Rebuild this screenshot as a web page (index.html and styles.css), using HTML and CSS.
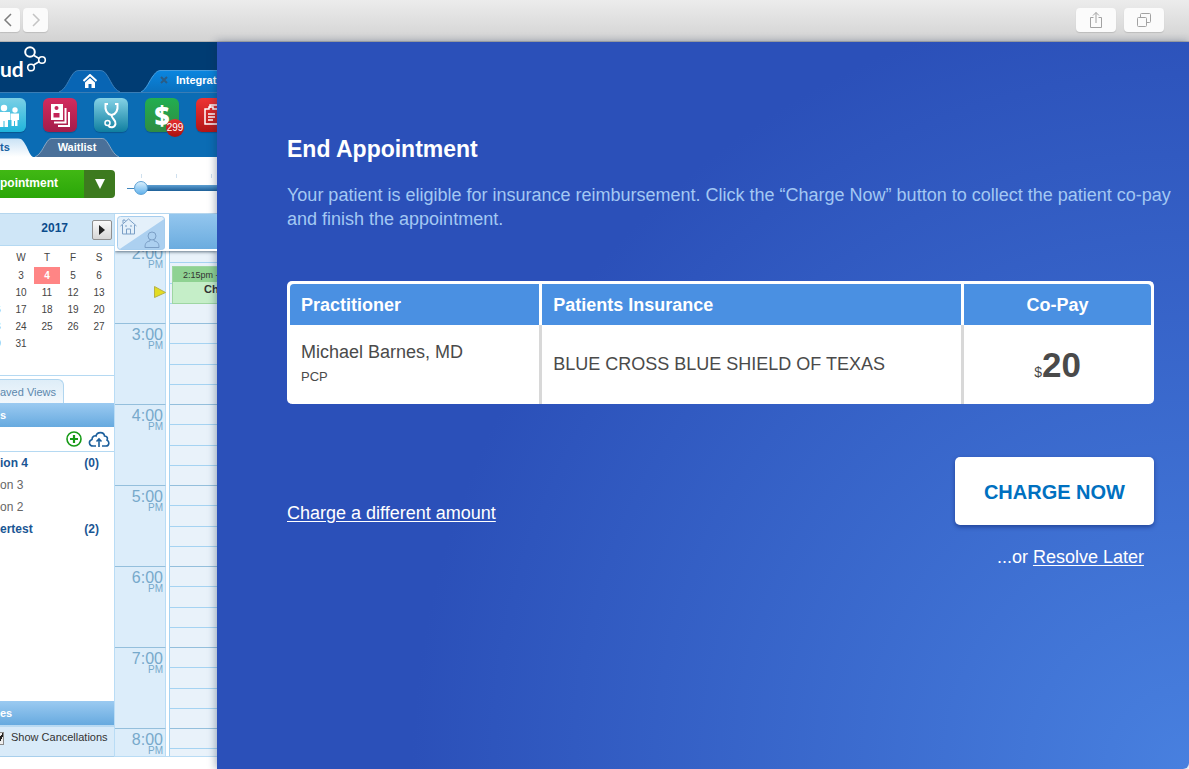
FILE: index.html
```html
<!DOCTYPE html>
<html lang="en">
<head>
    <meta charset="UTF-8">
    <meta name="viewport" content="width=device-width, initial-scale=1.0">
    <title>End Appointment</title>
    <link rel="stylesheet" href="styles.css">
</head>
<body>
    <div class="browser-bar">
        <div class="nav-buttons">
            <button type="button" class="bar-button back" aria-label="Back">
                <svg width="10" height="14" viewBox="0 0 10 14"><path d="M8 1 2 7l6 6" fill="none" stroke="#7d7d7d" stroke-width="1.5"/></svg>
            </button>
            <button type="button" class="bar-button forward" aria-label="Forward">
                <svg width="10" height="14" viewBox="0 0 10 14"><path d="m2 1 6 6-6 6" fill="none" stroke="#c4c4c4" stroke-width="1.5"/></svg>
            </button>
        </div>
        <div class="window-buttons">
            <button type="button" class="bar-button wide" aria-label="Share">
                <svg width="14" height="18" viewBox="0 0 14 18" fill="none" stroke="#a2a2a2"><path d="M4.500 6.500h-3v10h11v-10h-3M7 12V1.500M4 4.500l3-3 3 3"/></svg>
            </button>
            <button type="button" class="bar-button wide" aria-label="Show tabs">
                <svg width="14" height="14" viewBox="0 0 14 14" fill="none" stroke="#a2a2a2"><rect x=".5" y="4.500" width="9" height="9" rx="1"/><path d="M3.500 4.500v-3a1 1 0 0 1 1-1h8a1 1 0 0 1 1 1v7a1 1 0 0 1-1 1h-3"/></svg>
            </button>
        </div>
    </div>

    <div class="workspace">
        <div class="app">
            <header class="app-header">
                <div class="logo">
                    <span>ud</span>
                    <svg width="24" height="28" viewBox="0 0 24 28" fill="none" stroke="#fff"><circle cx="6" cy="6" r="4.800" stroke-width="2"/><circle cx="18" cy="14" r="3.300" stroke-width="1.600"/><circle cx="7" cy="21.500" r="3.300" stroke-width="1.600"/><path d="m10 9.500 5 3M9.500 19l6-3.500" stroke-width="1.600"/></svg>
                </div>
                <button type="button" class="app-tab home" aria-label="Home">
                    <svg class="tab-shape" viewBox="0 0 61 23" preserveAspectRatio="none"><path d="M0 23C7 20 9 11 14 4c2-3 4-3.500 7-3.500h19c3 0 5 .5 7 3.500 5 7 7 16 14 19" fill="#0865b4" stroke="#3d7fb8"/></svg>
                    <svg class="tab-icon" width="14" height="14" viewBox="0 0 14 14"><path d="m.5 7 6.500-6 6.500 6" fill="none" stroke="#fff" stroke-width="2"/><path d="M2 8.500 7 4l5 4.500V14H8.500v-4h-3v4H2z" fill="#fff"/></svg>
                </button>
                <button type="button" class="app-tab current">
                    <svg class="tab-shape" viewBox="0 0 90 23" preserveAspectRatio="none"><defs><linearGradient id="tab-fill" x2="0" y2="1"><stop stop-color="#0a86e0"/><stop offset="1" stop-color="#0b70bd"/></linearGradient></defs><path d="M0 23C6 20 8 11 13 5c2-3 4-4.500 7-4.500h70V23" fill="url(#tab-fill)" stroke="#4aa0e0"/></svg>
                    <svg class="tab-close" width="8" height="8" viewBox="0 0 8 8"><path d="m1 1 6 6M7 1 1 7" stroke="#2b5c85" stroke-width="2"/></svg>
                    <span>Integrat</span>
                </button>
            </header>

            <div class="ribbon">
                <div class="shortcuts">
                    <button type="button" class="shortcut people" aria-label="Patients">
                        <svg width="34" height="34" viewBox="0 0 34 34" fill="#fff"><circle cx="12" cy="10" r="3.200"/><path d="M6 14h12v8h-2v7h-3.500v-6h-1v6H8v-7H6z"/><circle cx="23" cy="12" r="2.700"/><path d="M18.500 15.500h8.500V22h-1.500v6H23v-5h-1v5h-2.500v-6h-1z"/></svg>
                    </button>
                    <button type="button" class="shortcut cards" aria-label="Records">
                        <svg width="34" height="34" viewBox="0 0 34 34"><path d="M8 6h12v16H8z" fill="#fff"/><circle cx="13.500" cy="10" r="2" fill="#c42458"/><path d="M10.500 15h6v4.500h-6z" fill="#c42458"/><path d="M11 24.500h11.500V10M15 28h11V14" fill="none" stroke="#fff" stroke-width="2"/></svg>
                    </button>
                    <button type="button" class="shortcut clinic" aria-label="Clinical">
                        <svg width="34" height="34" viewBox="0 0 34 34" fill="none" stroke="#fff" stroke-width="2"><path d="M14 6h-2.500C11 11 12 16 17.500 17 23 16 24 11 23.500 6H21"/><path d="M17.500 17c0 4 5 5 4 9-1 4-5 4-7 2"/><circle cx="13.500" cy="25" r="2.500" stroke-width="1.500"/></svg>
                    </button>
                    <button type="button" class="shortcut billing">
                        <span class="dollar">$</span>
                        <span class="badge">299</span>
                    </button>
                    <button type="button" class="shortcut notes" aria-label="Documents">
                        <svg width="34" height="34" viewBox="0 0 34 34" fill="none" stroke="#fff" stroke-width="1.500"><path d="M14 10V7h7l4 4v11h-3"/><path d="M9 11h4V9h4v2h5v15H9zM12 16h7M12 19h7M12 22h5"/></svg>
                    </button>
                </div>
                <div class="sub-tabs">
                    <button type="button" class="sub-tab selected">
                        <svg class="tab-shape" viewBox="0 0 34 20" preserveAspectRatio="none"><defs><linearGradient id="sub-fill" x2="0" y2="1"><stop stop-color="#c9e2f5"/><stop offset="1" stop-color="#fff"/></linearGradient></defs><path d="M0 .5h18c3 0 4 1 6 4 4 6 5 13 9 15.500H0z" fill="url(#sub-fill)"/></svg>
                        <span>ts</span>
                    </button>
                    <button type="button" class="sub-tab">
                        <svg class="tab-shape" viewBox="0 0 84 20" preserveAspectRatio="none"><path d="M0 20C6 17 8 10 12 4c2-3 3-3.500 6-3.500h48c3 0 4 .5 6 3.500 4 6 6 13 12 16" fill="#4a7099" stroke="#8fa9c2"/></svg>
                        <span>Waitlist</span>
                    </button>
                </div>
            </div>

            <div class="control-row">
                <div class="split-button">
                    <button type="button" class="new-appointment">pointment</button>
                    <button type="button" class="more" aria-label="More options">
                        <svg width="10" height="10" viewBox="0 0 10 10"><path d="M0 0h10L5 10z" fill="#fff"/></svg>
                    </button>
                </div>
                <div class="scale">
                    <input type="range" min="0" max="100" value="0" aria-label="Scale">
                </div>
            </div>

            <div class="app-body">
                <aside class="sidebar">
                    <div class="month">
                        <span>2017</span>
                        <button type="button" class="next" aria-label="Next month">
                            <svg width="6" height="10" viewBox="0 0 6 10"><path d="M0 0v10l6-5z" fill="#222"/></svg>
                        </button>
                    </div>
                    <div class="dates">
                        <table>
                            <thead>
                                <tr><th>T</th><th>W</th><th>T</th><th>F</th><th>S</th></tr>
                            </thead>
                            <tbody>
                                <tr><td>2</td><td>3</td><td class="today">4</td><td>5</td><td>6</td></tr>
                                <tr><td>9</td><td>10</td><td>11</td><td>12</td><td>13</td></tr>
                                <tr><td>16</td><td>17</td><td>18</td><td>19</td><td>20</td></tr>
                                <tr><td>23</td><td>24</td><td>25</td><td>26</td><td>27</td></tr>
                                <tr><td>30</td><td>31</td><td></td><td></td><td></td></tr>
                            </tbody>
                        </table>
                    </div>
                    <div class="views">
                        <button type="button" class="saved-views">aved Views</button>
                    </div>
                    <h2 class="section-title">s</h2>
                    <div class="list-tools">
                        <button type="button" aria-label="Add">
                            <svg width="16" height="16" viewBox="0 0 16 16" fill="none" stroke="#169a16"><circle cx="8" cy="8" r="7" stroke-width="1.600"/><path d="M8 4v8M4 8h8" stroke-width="2.200"/></svg>
                        </button>
                        <button type="button" aria-label="Upload">
                            <svg width="22" height="17" viewBox="0 0 22 17" fill="none" stroke="#1c5f9c" stroke-width="1.600"><path d="M8 15H5C1 15 0 10 4 8.500 4 5 7 4.500 8 5c1-4.500 8-4.500 8.500 0C19 5 20 7 19 9c3 2 2 6-1 6h-4"/><path d="M11 16V8M8.500 10.500 11 8l2.500 2.500"/></svg>
                        </button>
                    </div>
                    <ul class="calendars">
                        <li class="active"><span>ion 4</span><span>(0)</span></li>
                        <li><span>on 3</span></li>
                        <li><span>on 2</span></li>
                        <li class="active"><span>ertest</span><span>(2)</span></li>
                    </ul>
                    <h2 class="section-title">es</h2>
                    <label class="cancellations">
                        <input type="checkbox" checked>
                        <span>Show Cancellations</span>
                    </label>
                </aside>

                <main class="schedule">
                    <div class="schedule-head">
                        <button type="button" class="view-toggle" aria-label="Switch between location and provider">
                            <svg width="50" height="36" viewBox="0 0 50 36"><rect x="1.500" y="1.500" width="47" height="33" rx="3" fill="#e4f0fa"/><path d="M3 34.500h43a3 3 0 0 0 3-3V3.500z" fill="#acd0f0"/><rect x="1.500" y="1.500" width="47" height="33" rx="3" fill="none" stroke="#a6cdee"/><g fill="none" stroke="#7b9fc6"><path d="m4.500 11 8-7 8 7M6.500 10v9h12v-9M7 8V5h2v1M10.500 19v-5h4v5M9 11h2M14 11h2"/><circle cx="36" cy="21" r="4"/><path d="M29 32.500c0-5 2-6 5-6.500v-1.500M43 32.500c0-5-2-6-5-6.500v-1.500M29 32.500h14"/></g></svg>
                        </button>
                        <div class="provider"></div>
                    </div>
                    <div class="hours">
                        <div class="hour"><div class="time">2:00<small>PM</small></div><div class="slots"><i></i><i></i><i></i><i></i></div></div>
                        <div class="hour"><div class="time">3:00<small>PM</small></div><div class="slots"><i></i><i></i><i></i><i></i></div></div>
                        <div class="hour"><div class="time">4:00<small>PM</small></div><div class="slots"><i></i><i></i><i></i><i></i></div></div>
                        <div class="hour"><div class="time">5:00<small>PM</small></div><div class="slots"><i></i><i></i><i></i><i></i></div></div>
                        <div class="hour"><div class="time">6:00<small>PM</small></div><div class="slots"><i></i><i></i><i></i><i></i></div></div>
                        <div class="hour"><div class="time">7:00<small>PM</small></div><div class="slots"><i></i><i></i><i></i><i></i></div></div>
                        <div class="hour"><div class="time">8:00<small>PM</small></div><div class="slots"><i></i><i></i><i></i><i></i></div></div>
                        <svg class="now" width="12" height="12" viewBox="0 0 12 12"><path d="M.5.5v11l11-5z" fill="#e3dc22" stroke="#b5b04a"/></svg>
                        <div class="event">
                            <div class="event-time">2:15pm -</div>
                            <div class="event-name">Ch</div>
                        </div>
                    </div>
                </main>
            </div>
        </div>

        <section class="panel">
            <h1>End Appointment</h1>
            <p class="intro">Your patient is eligible for insurance reimbursement. Click the “Charge Now” button to collect the patient co-pay<br>and finish the appointment.</p>

            <table class="charge-table">
                <thead>
                    <tr>
                        <th class="practitioner">Practitioner</th>
                        <th class="insurance">Patients Insurance</th>
                        <th class="copay">Co-Pay</th>
                    </tr>
                </thead>
                <tbody>
                    <tr>
                        <td>Michael Barnes, MD<small>PCP</small></td>
                        <td>BLUE CROSS BLUE SHIELD OF TEXAS</td>
                        <td class="copay"><span class="currency">$</span><strong>20</strong></td>
                    </tr>
                </tbody>
            </table>

            <div class="actions">
                <a href="#amount" class="different">Charge a different amount</a>
                <div class="confirm">
                    <button type="button" class="charge-now">CHARGE NOW</button>
                    <p>...or <a href="#later">Resolve Later</a></p>
                </div>
            </div>
        </section>
    </div>
</body>
</html>
```
FILE: styles.css
```css
* {
    box-sizing: border-box;
}

body {
    font-family: "Liberation Sans", Arial, sans-serif;
    margin: 0;
    height: 100vh;
    display: flex;
    flex-direction: column;
    overflow: hidden;
    background: #fff;
}

button {
    font-family: inherit;
    margin: 0;
    padding: 0;
    border: 0;
    background: none;
    cursor: pointer;
}

svg {
    display: block;
    flex: none;
}

/* browser bar */
.browser-bar {
    flex: none;
    display: flex;
    justify-content: space-between;
    padding: 8px 25px 9px 0;
    background: linear-gradient(#ececec, #d3d3d3);
    border-bottom: 1px solid #b3b3b3;
}

.nav-buttons {
    display: flex;
    gap: 3px;
}

.window-buttons {
    display: flex;
    gap: 8px;
}

.bar-button {
    width: 25px;
    height: 24px;
    display: flex;
    align-items: center;
    justify-content: center;
    background: #fbfbfb;
    border-radius: 4px;
    box-shadow: 0 1px 1px #bdbdbd;
}

.bar-button.back {
    width: 20px;
    padding-right: 4px;
    border-radius: 0 4px 4px 0;
}

.bar-button.wide {
    width: 40px;
}

/* layout */
.workspace {
    flex: 1;
    min-height: 0;
    display: flex;
}

.app {
    flex: none;
    width: 217px;
    display: flex;
    flex-direction: column;
    overflow: hidden;
    padding-bottom: 12px;
}

/* app header */
.app-header {
    flex: none;
    display: flex;
    align-items: flex-end;
    height: 51px;
    background: #003c73;
    border-bottom: 1px solid #3a7db5;
}

.logo {
    flex: none;
    width: 59px;
    height: 46px;
    display: flex;
    align-items: flex-start;
    color: #fff;
    font: bold 21px/46px Lato, sans-serif;
}

.app-tab {
    position: relative;
    flex: none;
    height: 22px;
    display: flex;
    align-items: center;
    color: #fff;
    font-size: 11px;
    font-weight: bold;
}

.app-tab.home {
    width: 61px;
    justify-content: center;
    margin-right: 21px;
}

.app-tab.current {
    width: 90px;
    padding: 0 0 2px 19px;
    gap: 8px;
}

.tab-shape {
    position: absolute;
    inset: 0;
    width: 100%;
    height: 100%;
}

.tab-icon,
.tab-close,
.app-tab span,
.sub-tab span {
    position: relative;
}

/* ribbon */
.ribbon {
    flex: none;
    height: 64px;
    display: flex;
    flex-direction: column;
    justify-content: space-between;
    padding-top: 5px;
    background: #0b6cb4;
}

.shortcuts {
    display: flex;
    gap: 17px;
    margin-left: -8px;
}

.shortcut {
    position: relative;
    flex: none;
    width: 34px;
    height: 34px;
    border-radius: 6px;
    color: #fff;
    box-shadow: 0 1px 1px rgba(0, 0, 0, 0.2);
}

.people {
    background: linear-gradient(#7bd0e6, #1fb4dc);
}

.cards {
    background: linear-gradient(#d42a5e, #a31d4a);
}

.clinic {
    background: linear-gradient(#85d2e6, #0f7fa0);
}

.billing {
    background: linear-gradient(#22ae50, #2f8c43);
}

.notes {
    background: linear-gradient(#ee3333, #b31515);
}

.dollar {
    font: 800 26px/34px "Open Sans", sans-serif;
}

.badge {
    position: absolute;
    right: -5px;
    bottom: -5px;
    width: 18px;
    height: 18px;
    border-radius: 50%;
    background: linear-gradient(#e83030, #a81010);
    font-size: 10px;
    line-height: 18px;
    text-align: center;
}

.sub-tabs {
    display: flex;
    gap: 1px;
}

.sub-tab {
    position: relative;
    width: 84px;
    height: 19px;
    padding-bottom: 2px;
    color: #fff;
    font-size: 11px;
    font-weight: bold;
    text-align: center;
}

.sub-tab.selected {
    width: 34px;
    color: #1660a0;
    text-align: left;
}

/* new appointment and scale */
.control-row {
    flex: none;
    height: 56px;
    display: flex;
    align-items: flex-start;
    gap: 12px;
    padding-top: 13px;
}

.split-button {
    flex: none;
    width: 115px;
    height: 28px;
    display: flex;
    border-radius: 0 4px 4px 0;
    overflow: hidden;
}

.new-appointment {
    flex: 1;
    padding-bottom: 2px;
    background: linear-gradient(#41b814, #2aa608);
    color: #fff;
    font-size: 12px;
    font-weight: bold;
    text-align: left;
}

.more {
    width: 31px;
    display: flex;
    align-items: center;
    justify-content: center;
    background: #3d7a1f;
}

.scale {
    flex: none;
    width: 120px;
    padding-top: 10px;
    background: repeating-linear-gradient(90deg, #cfe0ee 0 1px, transparent 1px 35px) 14px 4px / 105px 4px no-repeat;
}

.scale input {
    display: block;
    width: 100%;
    height: 16px;
    margin: 0;
    appearance: none;
    background: linear-gradient(#3f86bd, #3f86bd) 0 8px / 7px 1px no-repeat;
}

.scale input::-webkit-slider-runnable-track {
    height: 6px;
    margin-left: 8px;
    background: linear-gradient(#5d9fd2, #1d5f98);
}

.scale input::-webkit-slider-thumb {
    appearance: none;
    width: 14px;
    height: 14px;
    margin: -4px 0 0 -1px;
    border: 1px solid #5fa3d6;
    border-radius: 50%;
    background: linear-gradient(#d8eefc, #62b2ec);
}

.app-body {
    flex: 1;
    min-height: 0;
    display: flex;
    border-top: 1px solid #b5d6ee;
}

/* sidebar */
.sidebar {
    flex: none;
    width: 115px;
    display: flex;
    flex-direction: column;
    overflow: hidden;
    border-right: 1px solid #b9dcf5;
    color: #444;
    font-size: 11px;
}

.month {
    flex: none;
    display: flex;
    align-items: center;
    justify-content: flex-end;
    gap: 24px;
    height: 32px;
    padding-right: 2px;
    background: #cfe6f7;
    border-bottom: 1px solid #b5d9f2;
    color: #0b4c8c;
    font-size: 12px;
    font-weight: bold;
}

.month span {
    padding-bottom: 4px;
}

.next {
    width: 20px;
    height: 20px;
    display: flex;
    align-items: center;
    justify-content: center;
    background: linear-gradient(#fafafa, #d6d6d6);
    border: 1px solid #8f8f8f;
    border-radius: 2px;
}

.dates {
    flex: none;
    height: 130px;
    padding-top: 2px;
    border-bottom: 1px solid #b5d9f2;
}

.dates table {
    width: 130px;
    margin-left: -18px;
    border-collapse: collapse;
    table-layout: fixed;
}

.dates th,
.dates td {
    height: 17px;
    padding: 0;
    font-size: 10px;
    font-weight: normal;
    text-align: center;
}

.dates th {
    height: 19px;
}

.dates .today {
    background: #ff8585;
    color: #fff;
    font-weight: bold;
}

.views {
    flex: none;
    padding-top: 3px;
}

.saved-views {
    width: 64px;
    height: 24px;
    background: linear-gradient(#deedf8, #f2f8fc);
    border: 1px solid #b0d5ef;
    border-width: 1px 1px 0 0;
    border-radius: 0 6px 0 0;
    color: #5c88ad;
    font-size: 11px;
    text-align: left;
}

.section-title {
    flex: none;
    height: 24px;
    margin: 0;
    background: linear-gradient(#9bcaf1, #67aadf);
    color: #fff;
    font-size: 11px;
    line-height: 24px;
}

.list-tools {
    flex: none;
    height: 25px;
    display: flex;
    align-items: center;
    justify-content: flex-end;
    gap: 6px;
    padding-right: 4px;
    border-bottom: 1px solid #b5d9f2;
}

.calendars {
    flex: 1;
    margin: 0;
    padding: 0;
    list-style: none;
    font-size: 12px;
    line-height: 22px;
}

.calendars li {
    display: flex;
    justify-content: space-between;
    padding-right: 15px;
    color: #666;
}

.calendars .active {
    color: #1a5694;
    font-weight: bold;
}

.cancellations {
    flex: none;
    height: 32px;
    display: flex;
    align-items: center;
    gap: 7px;
    padding-bottom: 10px;
    background: #d9ebf9;
    border-top: 2px solid #b9daf2;
    border-bottom: 1px solid #a8cfec;
    color: #333;
    white-space: nowrap;
}

.cancellations input {
    appearance: none;
    flex: none;
    width: 13px;
    height: 13px;
    margin: 4px 0 0 -9px;
    border: 1px solid #8a8a8a;
    background: linear-gradient(120deg, transparent 60%, #222 60% 75%, transparent 75%), #eee;
}

/* schedule */
.schedule {
    flex: 1;
    min-width: 0;
    display: flex;
    flex-direction: column;
    border-bottom: 1px solid #b9dcf5;
    overflow: hidden;
}

.schedule-head {
    position: relative;
    z-index: 1;
    flex: none;
    display: flex;
    gap: 3px;
    height: 37px;
    padding-left: 1px;
    background: #fff;
    box-shadow: 0 1px 3px rgba(40, 60, 80, 0.7);
}

.provider {
    flex: 1;
    margin-bottom: 2px;
    background: linear-gradient(#93c6ee, #6bacdf);
}

.hours {
    position: relative;
    flex: 1;
    min-height: 0;
    margin-top: -8px;
    overflow: hidden;
}

.hour {
    display: flex;
    gap: 3px;
    height: 81px;
}

.time {
    width: 51px;
    padding: 3px 2px 0 0;
    background: #dcedfa;
    border-right: 1px solid #b9dcf5;
    border-bottom: 1px solid #94bfdc;
    color: #77a9cb;
    font-size: 16px;
    line-height: 16px;
    text-align: right;
}

.time small {
    display: block;
    font-size: 10px;
    line-height: 6px;
}

.slots {
    flex: 1;
    display: grid;
    grid-template-rows: repeat(4, 1fr);
    background: #e9f2fa;
    border-left: 1px solid #a5d3f2;
}

.slots i {
    border-bottom: 1px solid #a5d3f2;
}

.slots i:last-child {
    border-bottom-color: #94bfdc;
}

.now {
    position: absolute;
    left: 39px;
    top: 43px;
}

.event {
    position: absolute;
    left: 57px;
    right: 0;
    top: 23px;
    height: 38px;
    background: #c5eec8;
    border: 1px solid #9ed6a2;
    border-right: 0;
    color: #333;
    white-space: nowrap;
    overflow: hidden;
}

.event-time {
    height: 15px;
    padding-left: 10px;
    background: #8fd292;
    font-size: 9px;
    line-height: 17px;
}

.event-name {
    padding-left: 31px;
    font-size: 11px;
    font-weight: bold;
    line-height: 15px;
}

/* end appointment panel */
.panel {
    position: relative;
    flex: 1;
    min-width: 0;
    padding: 93px 35px 0 70px;
    border-radius: 0 0 6px 0;
    background: radial-gradient(circle at 100% 100%, #4880df 0, #2b50b9 64%);
    box-shadow: -1px 0 8px rgba(20, 40, 80, 0.4);
    color: #fff;
    font-size: 18px;
}

.panel a {
    color: #fff;
    text-underline-offset: 2px;
}

.panel h1 {
    margin: 0 0 20px;
    font-size: 23px;
    line-height: 28px;
}

.intro {
    margin: 0;
    color: #a3c8f3;
    line-height: 24px;
    white-space: nowrap;
}

.charge-table {
    width: 100%;
    margin-top: 50px;
    border: 3px solid #fff;
    border-bottom: 0;
    border-radius: 5px;
    border-spacing: 0;
    table-layout: fixed;
    background: #fff;
    color: #4a4a4a;
}

.charge-table th,
.charge-table td {
    padding: 0 11px;
    text-align: left;
}

.charge-table th {
    height: 41px;
    padding-top: 2px;
    background: #4a90e2;
    border-right: 3px solid #fff;
    color: #fff;
}

.charge-table td {
    height: 79px;
    border-right: 3px solid #d8d8d8;
}

.charge-table th:first-child {
    border-radius: 4px 0 0 0;
}

.charge-table th:last-child {
    border-radius: 0 4px 0 0;
}

.charge-table th:last-child,
.charge-table td:last-child {
    border-right: 0;
}

.charge-table .practitioner {
    width: 29.3%;
}

.charge-table .insurance {
    width: 49%;
}

.charge-table .copay {
    text-align: center;
}

.charge-table small {
    display: block;
    margin: 6px 0 4px;
    font-size: 13px;
}

.currency {
    font-size: 14px;
}

.charge-table strong {
    font-size: 35px;
}

.actions {
    display: flex;
    justify-content: space-between;
    align-items: flex-start;
    margin-top: 53px;
}

.different {
    margin-top: 46px;
}

.confirm {
    text-align: right;
}

.charge-now {
    padding: 24px 29px 21px;
    border-radius: 5px;
    background: #fff;
    box-shadow: 0 2px 4px rgba(10, 30, 100, 0.5);
    color: #0070c0;
    font-size: 20px;
    font-weight: bold;
}

.confirm p {
    margin: 22px 10px 0 0;
}
```
